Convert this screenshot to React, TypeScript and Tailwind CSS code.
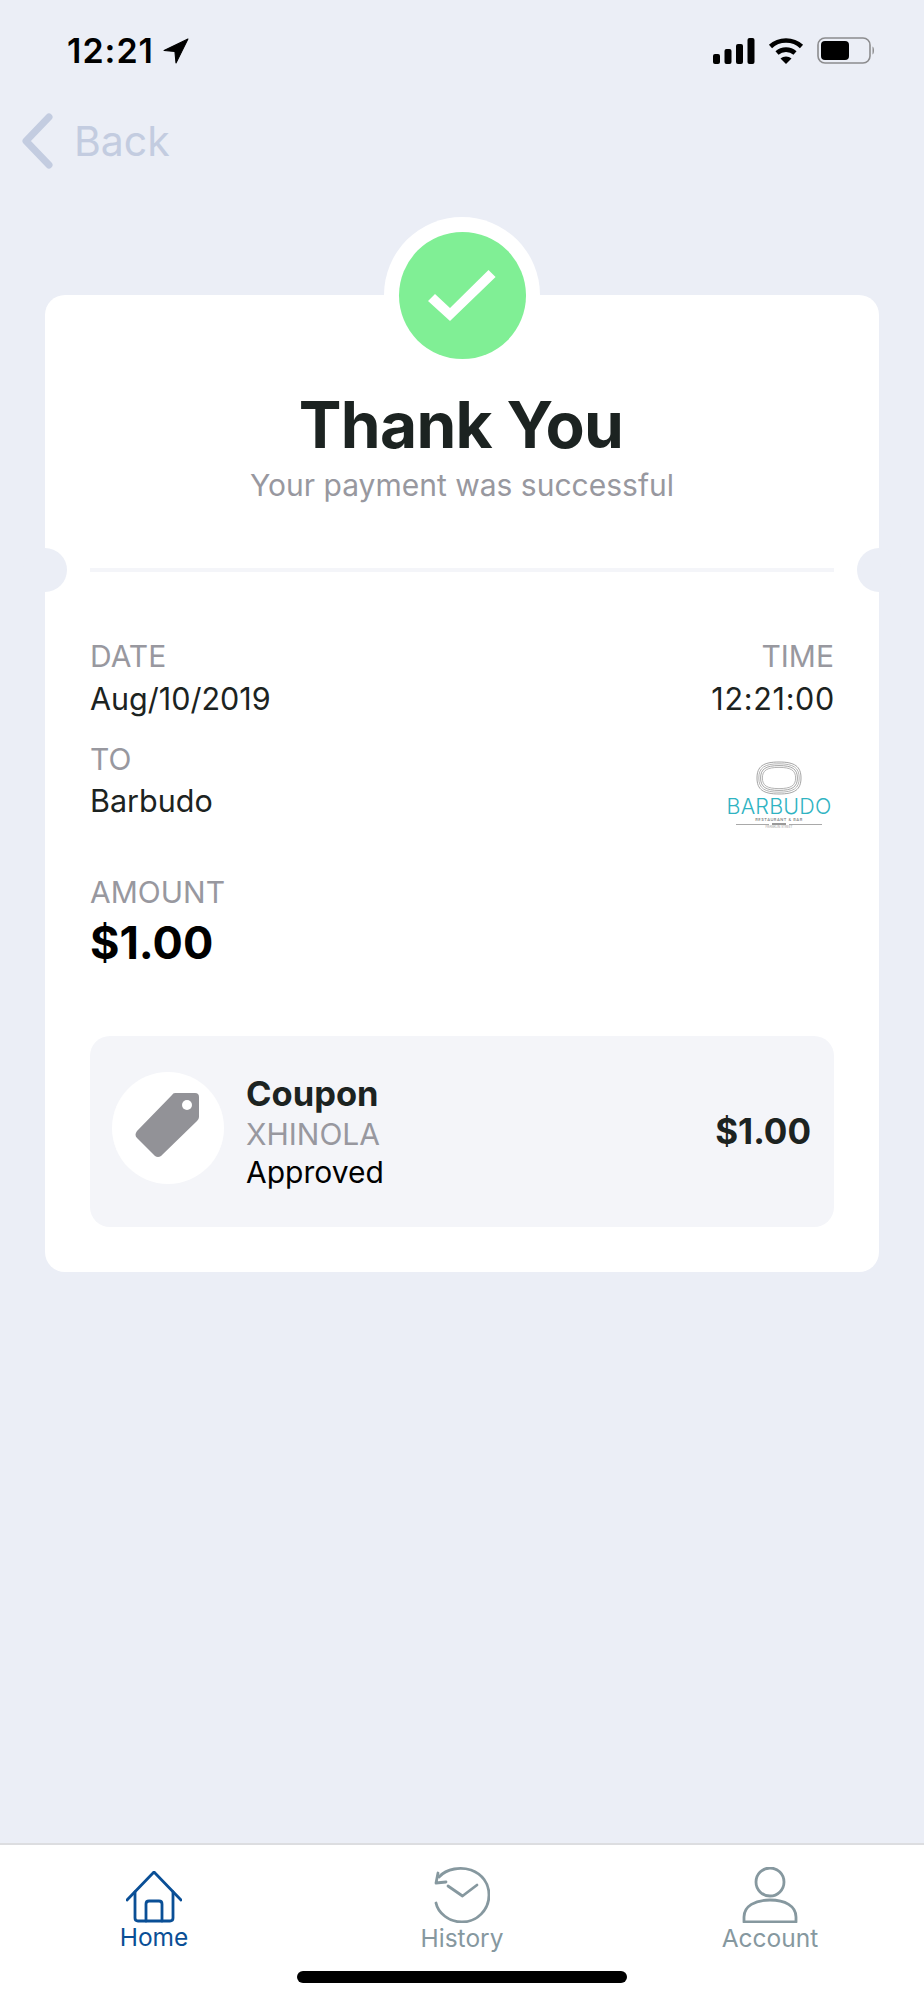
const font = { fontFamily: 'Inter, "Noto Sans", sans-serif' };

function StatusBar() {
  return (
    <div className="flex items-center justify-between h-[100px] pl-[67px] pr-[49px] pt-[1px]">
      <div className="flex items-center gap-[9px]">
        <span className="text-[34px] font-semibold leading-none text-black tracking-[1px]">12:21</span>
        <svg width="26" height="26" viewBox="0 0 24 24">
          <path d="M23 1 L1 11.5 L11 12.5 L12 23 Z" fill="#000" stroke="#000" strokeWidth="1" strokeLinejoin="round" />
        </svg>
      </div>
      <div className="flex items-center gap-[13px]">
        <svg width="42" height="26" viewBox="0 0 42 26">
          <rect x="0" y="16" width="7" height="10" rx="2" fill="#000" />
          <rect x="11.5" y="11" width="7" height="15" rx="2" fill="#000" />
          <rect x="23" y="6" width="7" height="20" rx="2" fill="#000" />
          <rect x="34.5" y="0" width="7" height="26" rx="2" fill="#000" />
        </svg>
        <svg width="36" height="27" viewBox="0 0 36 27">
          <path d="M2.5 9.5 C11 1.5 25 1.5 33.5 9.5" fill="none" stroke="#000" strokeWidth="4.6" />
          <path d="M9 16 C14 11.5 22 11.5 27 16" fill="none" stroke="#000" strokeWidth="4.6" />
          <path d="M18 27 L12.5 21.5 C15.5 18.8 20.5 18.8 23.5 21.5 Z" fill="#000" />
        </svg>
        <svg width="58" height="27" viewBox="0 0 58 27">
          <rect x="1" y="1" width="52" height="25" rx="7" fill="none" stroke="#8c8c8e" strokeWidth="1.6" />
          <rect x="4" y="4" width="28" height="19" rx="4" fill="#000" />
          <path d="M55.5 9.5 C57.5 10.5 57.5 16.5 55.5 17.5 Z" fill="#8c8c8e" />
        </svg>
      </div>
    </div>
  );
}

function BackLink() {
  return (
    <div className="flex items-center h-[80px] pl-[21px] pt-[2px] gap-[21px]">
      <svg width="32" height="56" viewBox="0 0 32 56">
        <path d="M28 4 L5 28 L28 52" fill="none" stroke="#c3cce0" strokeWidth="7" strokeLinecap="round" strokeLinejoin="round" />
      </svg>
      <span className="text-[41px] leading-none text-[#c3cce0]">Back</span>
    </div>
  );
}

// squarish oval for the logo rings
function ring(rx: number, ry: number) {
  const cx = 23;
  const cy = 17;
  const kx = rx * 0.72;
  const ky = ry * 0.72;
  return `M${cx - rx} ${cy} C${cx - rx} ${cy - ky} ${cx - kx} ${cy - ry} ${cx} ${cy - ry} C${cx + kx} ${cy - ry} ${cx + rx} ${cy - ky} ${cx + rx} ${cy} C${cx + rx} ${cy + ky} ${cx + kx} ${cy + ry} ${cx} ${cy + ry} C${cx - kx} ${cy + ry} ${cx - rx} ${cy + ky} ${cx - rx} ${cy} Z`;
}

function BarbudoLogo() {
  return (
    <div className="flex flex-col items-center w-[108px] mr-[1px] mt-[19px]">
      <svg width="46" height="34" viewBox="0 0 46 34">
        <path d={ring(22, 16)} fill="none" stroke="#9a9a9a" strokeWidth="0.9" />
        <path d={ring(20.2, 14.2)} fill="none" stroke="#ababab" strokeWidth="0.9" />
        <path d={ring(18.4, 12.4)} fill="none" stroke="#9a9a9a" strokeWidth="0.9" />
        <path d={ring(16.6, 10.6)} fill="none" stroke="#ababab" strokeWidth="0.9" />
      </svg>
      <span className="text-[21.5px] leading-[22px] font-light text-[#2fb3c2] tracking-[0.2px]">BARBUDO</span>
      <span className="text-[4px] leading-[5px] text-[#777] tracking-[0.5px] font-medium">RESTAURANT &amp; BAR</span>
      <div className="flex items-center gap-[3px] mt-[1px]">
        <div className="w-[33px] h-[1px] bg-[#a9a9a9]" />
        <div className="w-[14px] h-[2px] bg-[#999]" />
        <div className="w-[33px] h-[1px] bg-[#a9a9a9]" />
      </div>
      <span className="text-[3px] leading-[5px] text-[#999]">FRANKLIN STREET</span>
    </div>
  );
}

function TicketCard() {
  return (
    <div className="relative mx-[45px] mt-[115px] bg-white rounded-[20px] pb-[45px]">
      {/* check badge */}
      <div className="absolute left-1/2 top-[-78px] -translate-x-1/2 w-[156px] h-[156px] rounded-full bg-white flex items-center justify-center">
        <div className="w-[127px] h-[127px] rounded-full bg-[#80ef95] flex items-center justify-center">
          <svg width="68" height="51" viewBox="0 0 68 51">
            <path d="M0 31 L7 24 L22 38 L60.5 0 L67.6 7 L22 51 Z" fill="#fff" />
          </svg>
        </div>
      </div>
      {/* ticket notches */}
      <div className="absolute left-[-22px] top-[253px] w-[44px] h-[44px] rounded-full bg-[#ebeef6]" />
      <div className="absolute right-[-22px] top-[253px] w-[44px] h-[44px] rounded-full bg-[#ebeef6]" />

      <div className="flex flex-col pt-[95px] px-[45px]">
        <div className="text-center text-[64px] leading-[70px] font-bold text-[#1c2321] tracking-[-0.7px] pr-[2px]">Thank You</div>
        <div className="text-center text-[30px] leading-[34px] mt-[8px] text-[#98989f]">Your payment was successful</div>
        <div className="h-[4px] bg-[#f4f5f9] mt-[66px]" />

        <div className="flex justify-between mt-[67px]">
          <div className="flex flex-col">
            <span className="text-[30px] leading-[34px] text-[#98989f]">DATE</span>
            <span className="text-[30.5px] leading-[34px] mt-[9px] text-[#1c2321]">Aug/10/2019</span>
          </div>
          <div className="flex flex-col items-end">
            <span className="text-[30px] leading-[34px] text-[#98989f]">TIME</span>
            <span className="text-[30.5px] leading-[34px] mt-[9px] mr-[-1px] text-[#1c2321] tracking-[0.7px]">12:21:00</span>
          </div>
        </div>

        <div className="flex justify-between items-start mt-[26px]">
          <div className="flex flex-col">
            <span className="text-[30px] leading-[34px] text-[#98989f]">TO</span>
            <span className="text-[30.5px] leading-[34px] mt-[8px] text-[#1c2321]">Barbudo</span>
          </div>
          <BarbudoLogo />
        </div>

        <div className="flex flex-col mt-[45px]">
          <span className="text-[30px] leading-[34px] text-[#98989f]">AMOUNT</span>
          <span className="text-[45px] leading-[50px] mt-[9px] font-bold text-black">$1.00</span>
        </div>

        <div className="flex items-center justify-between mt-[68px] h-[191px] rounded-[20px] bg-[#f4f5f9] pl-[22px] pr-[23px]">
          <div className="flex items-center gap-[22px]">
            <div className="w-[112px] h-[112px] mb-[8px] rounded-full bg-white flex items-center justify-center">
              <svg width="67" height="69" viewBox="0 0 67 69">
                <path d="M40 0 L60 0 Q64 0 64 4 L64 24 Q64 26 62 28 L26 63 Q23 65 20 63 L2 45 Q-1 42 2 38 L37 2 Q38 0 40 0 Z" fill="#929297" />
                <circle cx="52" cy="12" r="5" fill="#fff" />
              </svg>
            </div>
            <div className="flex flex-col">
              <span className="text-[34.5px] leading-[46px] font-bold text-[#1c2321]">Coupon</span>
              <span className="text-[30px] leading-[35px] text-[#98989f]">XHINOLA</span>
              <span className="text-[30px] leading-[40px] text-black">Approved</span>
            </div>
          </div>
          <span className="text-[35px] font-bold text-[#1c2321]">$1.00</span>
        </div>
      </div>
    </div>
  );
}

function TabBar() {
  return (
    <div className="relative mt-auto h-[157px] bg-white border-t-[2px] border-[#dcdde0] grid grid-cols-3">
      <div className="flex flex-col items-center pt-[26px]">
        <svg width="56" height="52" viewBox="0 0 56 52" fill="none" stroke="#0a4f96" strokeWidth="2.8" strokeLinejoin="round" strokeLinecap="round">
          <path d="M1 29 L28 1 L55 29" />
          <path d="M9 21 L9 47 Q9 50 12 50 L44 50 Q47 50 47 47 L47 21" />
          <path d="M20 50 L20 33 Q20 30 23 30 L33 30 Q36 30 36 33 L36 50" />
        </svg>
        <span className="text-[24.5px] leading-[28px] text-[#0a4f96]">Home</span>
      </div>
      <div className="flex flex-col items-center pt-[22px]">
        <svg width="56" height="56" viewBox="0 0 56 56" fill="none" stroke="#86989f" strokeWidth="2.8" strokeLinejoin="round" strokeLinecap="round">
          <path d="M5 10 C13 1 27 0 37 3 C48 7 55 16 55 28 C55 43 43 55 28 55 C15 55 4 46 2 36" />
          <path d="M2 16 L4 6 M2 16 L12 15" />
          <path d="M14 19 L28.5 29 L43 18" />
        </svg>
        <span className="text-[24.5px] leading-[28px] mt-[1px] text-[#86989f]">History</span>
      </div>
      <div className="flex flex-col items-center pt-[22px]">
        <svg width="56" height="56" viewBox="0 0 56 56" fill="none" stroke="#86989f" strokeWidth="2.8" strokeLinejoin="round">
          <circle cx="28" cy="15" r="14" />
          <path d="M2 55 L2 50 C2 39 13 33 28 33 C43 33 54 39 54 50 L54 55 Z" />
        </svg>
        <span className="text-[24.5px] leading-[28px] mt-[1px] text-[#86989f]">Account</span>
      </div>
      <div className="absolute left-1/2 -translate-x-1/2 bottom-[17px] w-[330px] h-[12px] rounded-full bg-black" />
    </div>
  );
}

export default function App() {
  return (
    <div className="flex flex-col w-[924px] min-h-[2000px] bg-[#ebeef6]" style={font}>
      <StatusBar />
      <BackLink />
      <TicketCard />
      <TabBar />
    </div>
  );
}
